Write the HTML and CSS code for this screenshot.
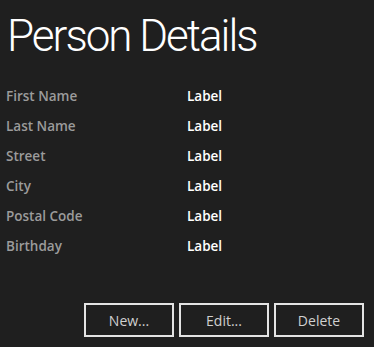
FILE: index.html
```html
<!DOCTYPE html>
<html>
<head>
<meta charset="utf-8">
<link rel="stylesheet" href="styles.css">
</head>
<body>
<div class="page">
  <h1 class="title">Person Details</h1>
  <div class="grid">
    <div class="key">First Name</div><div class="val">Label</div>
    <div class="key">Last Name</div><div class="val">Label</div>
    <div class="key">Street</div><div class="val">Label</div>
    <div class="key">City</div><div class="val">Label</div>
    <div class="key">Postal Code</div><div class="val">Label</div>
    <div class="key">Birthday</div><div class="val">Label</div>
  </div>
  <div class="buttons">
    <button class="btn">New...</button>
    <button class="btn">Edit...</button>
    <button class="btn">Delete</button>
  </div>
</div>
</body>
</html>
```
FILE: styles.css
```css
html, body {
  margin: 0;
  padding: 0;
  background: #1f1f1f;
  width: 374px;
  height: 347px;
  overflow: hidden;
}
.page {
  font-family: "Open Sans", "Noto Sans", sans-serif;
  display: flex;
  flex-direction: column;
  height: 347px;
  box-sizing: border-box;
  padding: 0 10px 10px 6px;
}
.title {
  margin: 8px 0 0 1px;
  font-family: Roboto, "Open Sans", sans-serif;
  font-weight: 300;
  font-size: 44px;
  line-height: 56px;
  color: #ffffff;
  letter-spacing: -2px;
}
.grid {
  margin-top: 22px;
  display: grid;
  grid-template-columns: 181px 1fr;
  grid-auto-rows: 30px;
  font-size: 13.5px;
}
.key {
  color: #9b9b9b;
  font-weight: 600;
  line-height: 20px;
}
.val {
  color: #ffffff;
  font-weight: 600;
  line-height: 20px;
}
.buttons {
  margin-top: auto;
  display: flex;
  justify-content: flex-end;
  gap: 5px;
}
.btn {
  width: 90px;
  height: 34px;
  background: #1f1f1f;
  border: 2px solid #e3e3e3;
  color: #d0d0d0;
  font-family: "Open Sans", "Noto Sans", sans-serif;
  font-size: 14px;
  padding: 0;
}
```
